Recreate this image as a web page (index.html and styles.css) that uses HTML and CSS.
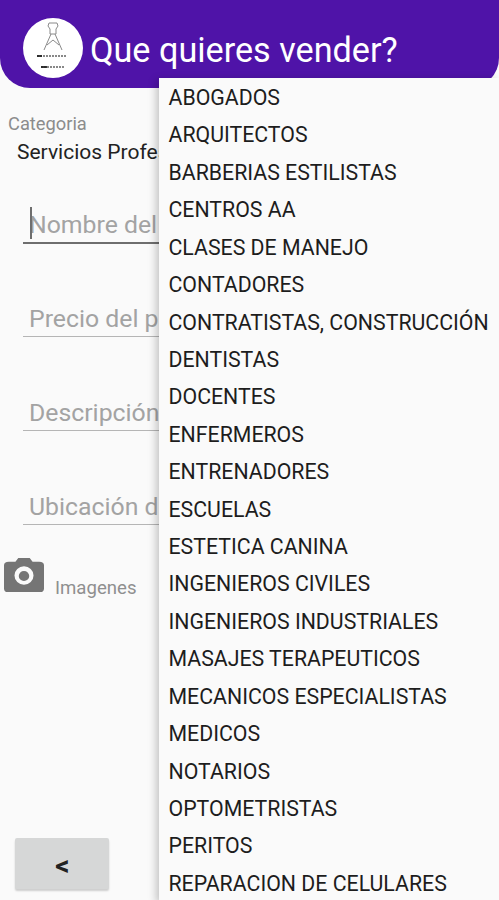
FILE: index.html
```html
<!DOCTYPE html>
<html>
<head>
    <title>Que quieres vender?</title>
    <link rel="stylesheet" href="styles.css">
</head>
<body>
    <div class="screen">
        <header class="app-bar">
            <div class="logo">
                <svg width="60" height="60" viewBox="0 0 60 60">
                    <circle cx="30" cy="30" r="30" fill="#fff"/>
                    <g fill="none" stroke="#8a8a8a" stroke-width="1">
                        <path d="M26 5h8l1 3-2 3v5h-6v-5l-2-3z"/>
                        <path d="M28 16l-7 16M32 16l7 16M24 27l6-5 6 5"/>
                    </g>
                    <g stroke-width="1.800" fill="none">
                        <path d="M14 38h30" stroke="#888" stroke-dasharray="2 1"/>
                        <path d="M14 38h5" stroke="#222"/>
                        <path d="M18 49h24" stroke="#888" stroke-dasharray="2 1"/>
                        <path d="M18 49h6" stroke="#222"/>
                    </g>
                </svg>
            </div>
            <h1 class="title">Que quieres vender?</h1>
        </header>

        <main class="form">
            <div class="category">
                <label class="category-label">Categoria</label>
                <div class="category-value">Servicios Profesionales</div>
            </div>
            <div class="field field-active"><span class="caret"></span>Nombre del producto</div>
            <div class="field">Precio del producto</div>
            <div class="field">Descripción del producto</div>
            <div class="field">Ubicación del producto</div>
            <div class="images-row">
                <svg class="camera" width="40" height="35" viewBox="0 0 42 38" preserveAspectRatio="none">
                    <path fill="#757575" fill-rule="evenodd" d="M5 4h7l3-4h12l3 4h7q5 0 5 4v25q0 4-4 4H4q-4 0-4-4V8q0-4 5-4zM21 9a10 10 0 1 0 0 20 10 10 0 0 0 0-20zM21 14a5.500 5.500 0 1 1 0 11 5.500 5.500 0 0 1 0-11z"/>
                </svg>
                <span class="images-label">Imagenes</span>
            </div>
        </main>

        <button class="back-btn">&lt;</button>

        <ul class="dropdown">
            <li>ABOGADOS</li>
            <li>ARQUITECTOS</li>
            <li>BARBERIAS ESTILISTAS</li>
            <li>CENTROS AA</li>
            <li>CLASES DE MANEJO</li>
            <li>CONTADORES</li>
            <li>CONTRATISTAS, CONSTRUCCIÓN</li>
            <li>DENTISTAS</li>
            <li>DOCENTES</li>
            <li>ENFERMEROS</li>
            <li>ENTRENADORES</li>
            <li>ESCUELAS</li>
            <li>ESTETICA CANINA</li>
            <li>INGENIEROS CIVILES</li>
            <li>INGENIEROS INDUSTRIALES</li>
            <li>MASAJES TERAPEUTICOS</li>
            <li>MECANICOS ESPECIALISTAS</li>
            <li>MEDICOS</li>
            <li>NOTARIOS</li>
            <li>OPTOMETRISTAS</li>
            <li>PERITOS</li>
            <li>REPARACION DE CELULARES</li>
        </ul>
    </div>
</body>
</html>
```

FILE: styles.css
```css
html, body {
    margin: 0;
    padding: 0;
}

body {
    font-family: Roboto, "Liberation Sans", sans-serif;
    background: #fafafa;
}

.screen {
    position: relative;
    width: 499px;
    height: 900px;
    overflow: hidden;
    background: #fafafa;
}

.app-bar {
    display: flex;
    align-items: center;
    gap: 7px;
    height: 88px;
    padding-left: 23px;
    box-sizing: border-box;
    background: #4f13a8;
    border-radius: 0 0 30px 30px;
}

.logo {
    width: 60px;
    height: 60px;
    margin-top: 8px;
    flex-shrink: 0;
}

.title {
    margin: 12px 0 0;
    font-size: 34.200px;
    font-weight: 400;
    color: #fff;
    white-space: nowrap;
}

.form {
    padding: 26px 0 0 8px;
}

.category-label {
    display: block;
    font-size: 18.300px;
    line-height: 20px;
    color: #8c8c8c;
}

.category-value {
    margin: 6px 0 0 9px;
    font-size: 21px;
    line-height: 24px;
    color: #222;
    white-space: nowrap;
}

.field {
    position: relative;
    width: 300px;
    height: 38px;
    margin: 0 0 56px 15px;
    padding-left: 6px;
    box-sizing: border-box;
    font-size: 24.800px;
    line-height: 40px;
    color: #a3a3a3;
    border-bottom: 1px solid #b5b5b5;
    white-space: nowrap;
}

.field-active {
    height: 39px;
    margin-top: 41px;
    margin-bottom: 55px;
    border-bottom: 2px solid #6e6e6e;
}

.caret {
    position: absolute;
    left: 7px;
    top: 2px;
    width: 2px;
    height: 32px;
    background: #6e6e6e;
}

.images-row {
    display: flex;
    align-items: flex-end;
    gap: 11px;
    margin: -23px 0 0 -4px;
}

.camera {
    flex-shrink: 0;
    margin-bottom: 6px;
}

.images-label {
    font-size: 18.600px;
    line-height: 22px;
    color: #8f8f8f;
}

.back-btn {
    position: absolute;
    left: 15px;
    top: 838px;
    width: 94px;
    height: 51px;
    padding: 0 0 0 1px;
    border: 0;
    border-radius: 2px;
    background: #d6d7d7;
    box-shadow: 0 2px 2px rgba(0,0,0,0.18);
    font-family: Roboto, "Liberation Sans", sans-serif;
    font-size: 28px;
    font-weight: 700;
    line-height: 56px;
    color: #222;
}

.dropdown {
    position: absolute;
    left: 159px;
    top: 78px;
    width: 340px;
    margin: 0;
    padding: 0;
    list-style: none;
    background: #fafafa;
    box-shadow: -3px 2px 8px rgba(0,0,0,0.22);
}

.dropdown li {
    height: 37.430px;
    padding-left: 9.500px;
    font-size: 21.300px;
    line-height: 39px;
    color: #1d1d1d;
    white-space: nowrap;
}
```
